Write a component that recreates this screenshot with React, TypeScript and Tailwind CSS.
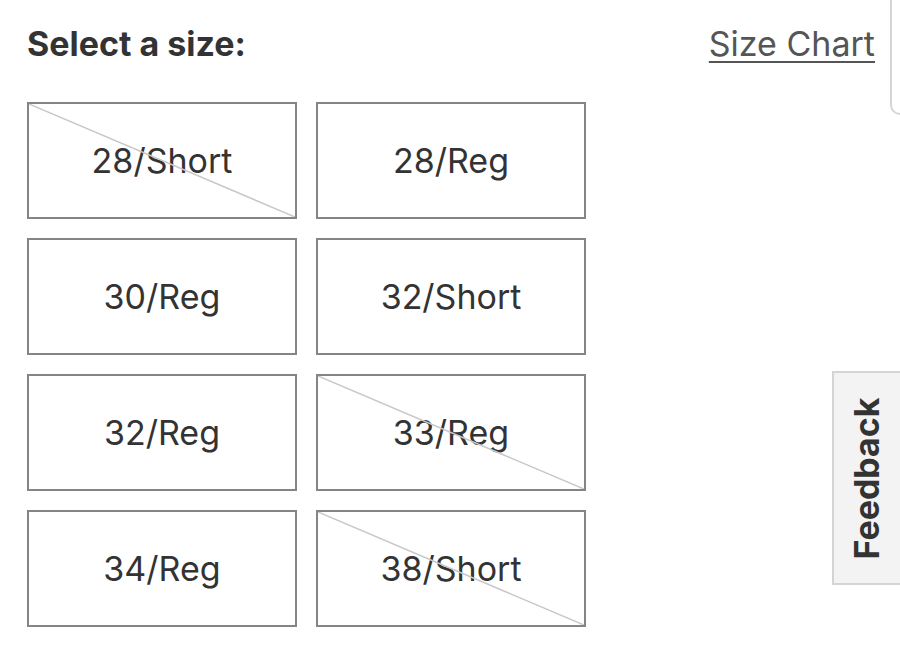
import React from "react";

const sizes = [
  { label: "28/Short", soldOut: true },
  { label: "28/Reg", soldOut: false },
  { label: "30/Reg", soldOut: false },
  { label: "32/Short", soldOut: false },
  { label: "32/Reg", soldOut: false },
  { label: "33/Reg", soldOut: true },
  { label: "34/Reg", soldOut: false },
  { label: "38/Short", soldOut: true },
];

const SizeBox = ({ label, soldOut }: { label: string; soldOut: boolean }) => {
  return (
    <button className="relative h-[117px] w-[270px] border-2 border-[#858585] bg-white text-[34px] text-[#333333]">
      {label}
      {soldOut && (
        <svg
          className="pointer-events-none absolute inset-0 h-full w-full"
          viewBox="0 0 100 100"
          preserveAspectRatio="none"
        >
          <line
            x1="0"
            y1="0"
            x2="100"
            y2="100"
            stroke="#c8c8c8"
            strokeWidth="1.5"
            vectorEffect="non-scaling-stroke"
          />
        </svg>
      )}
    </button>
  );
};

export default function App() {
  return (
    <div
      className="relative h-[660px] w-[900px] overflow-hidden bg-white"
      style={{ fontFamily: "Inter, 'Noto Sans', sans-serif" }}
    >
      {/* edge of the card on the right */}
      <div className="absolute right-[-20px] top-[-10px] h-[125px] w-[30px] rounded-bl-[10px] border-2 border-[#d6d6d6]" />

      <div className="pl-[27px] pr-[25px] pt-[24px]">
        <div className="flex items-center justify-between">
          <h2 className="text-[34px] font-bold leading-[40px] text-[#333333]">
            Select a size:
          </h2>
          <a className="text-[34px] leading-[40px] text-[#555555] underline decoration-2 underline-offset-[5px]">
            Size Chart
          </a>
        </div>

        <div className="mt-[38px] grid w-fit grid-cols-[270px_270px] gap-[19px]">
          {sizes.map((s) => (
            <SizeBox key={s.label} label={s.label} soldOut={s.soldOut} />
          ))}
        </div>
      </div>

      {/* feedback tab */}
      <div className="absolute left-[832px] top-[371px] flex h-[214px] w-[80px] items-center justify-center border-2 border-[#d4d4d4] bg-[#f3f3f3]">
        <span className="ml-[-12px] -rotate-90 whitespace-nowrap text-[34px] font-bold text-[#333333]">
          Feedback
        </span>
      </div>
    </div>
  );
}
